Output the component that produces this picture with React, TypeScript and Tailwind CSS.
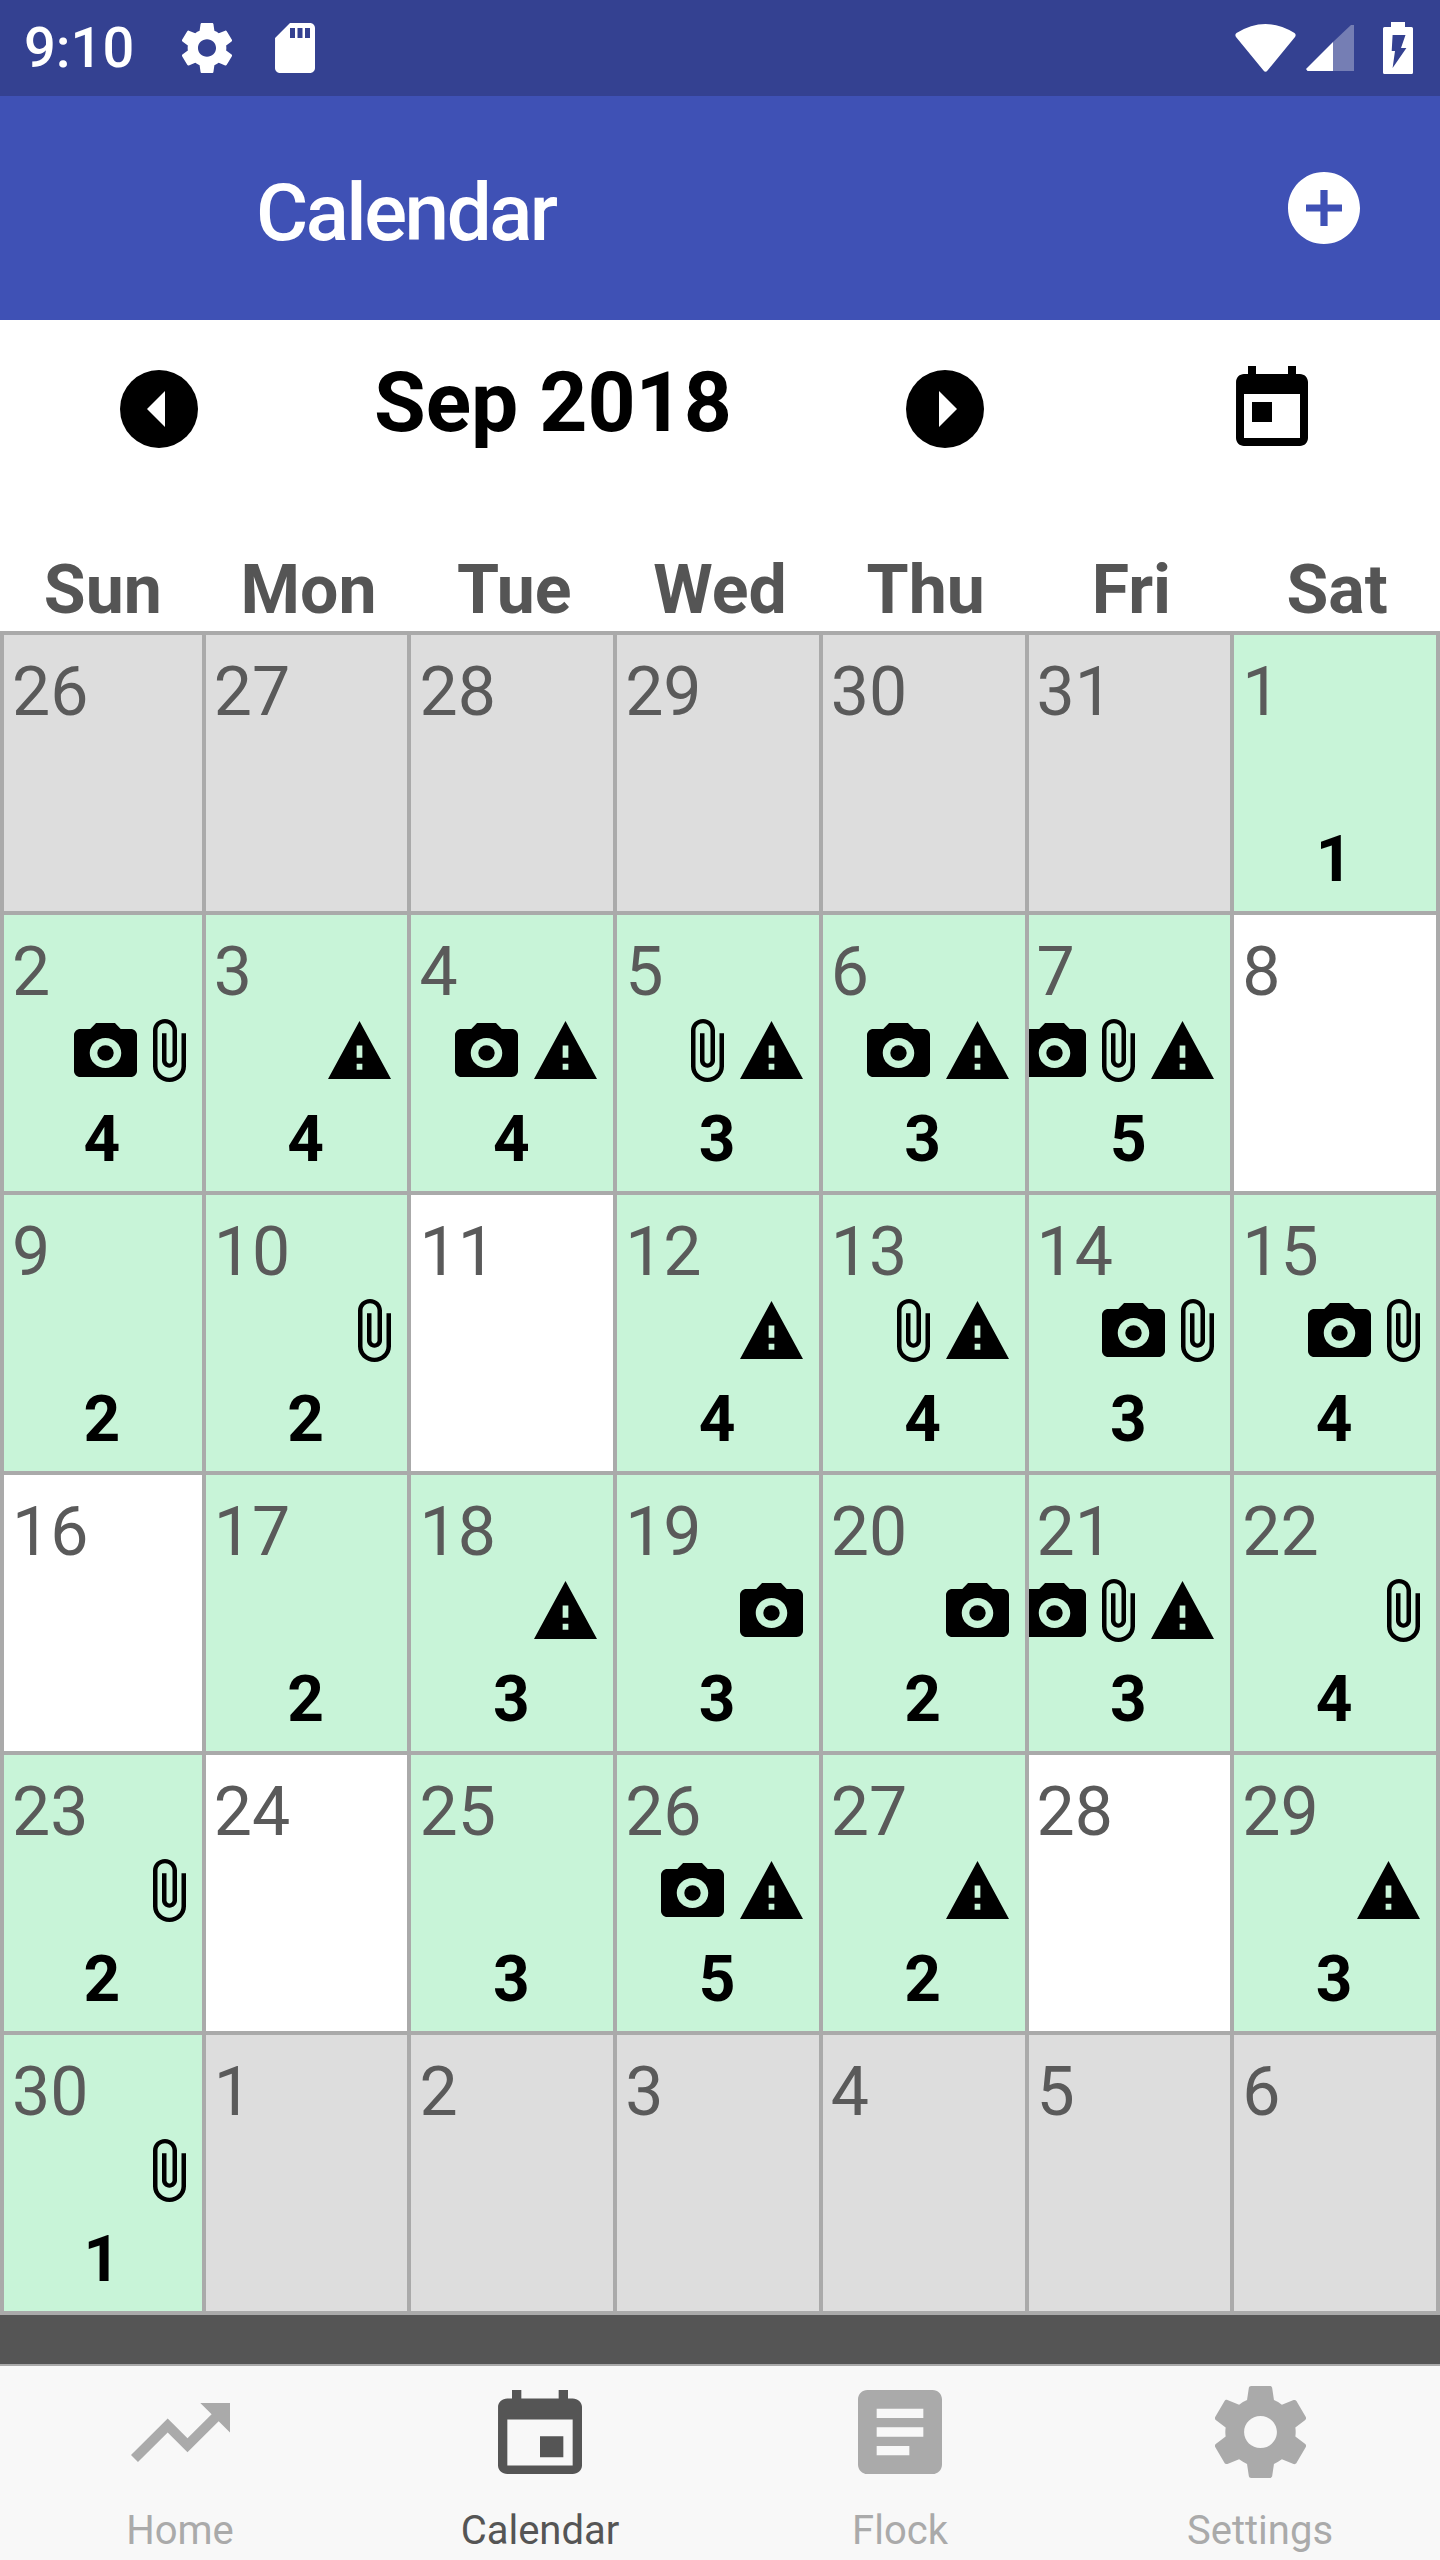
import * as React from "react";

type Mark = "c" | "p" | "w";
type Tone = "out" | "on" | "off";

interface Day {
  n: number;
  tone: Tone;
  marks?: Mark[];
  count?: number;
}

const out = (n: number): Day => ({ n, tone: "out" });
const off = (n: number): Day => ({ n, tone: "off" });
const on = (n: number, count: number, ...marks: Mark[]): Day => ({ n, tone: "on", count, marks });

const days: Day[] = [
  out(26), out(27), out(28), out(29), out(30), out(31), on(1, 1),
  on(2, 4, "c", "p"), on(3, 4, "w"), on(4, 4, "c", "w"), on(5, 3, "p", "w"), on(6, 3, "c", "w"), on(7, 5, "c", "p", "w"), off(8),
  on(9, 2), on(10, 2, "p"), off(11), on(12, 4, "w"), on(13, 4, "p", "w"), on(14, 3, "c", "p"), on(15, 4, "c", "p"),
  off(16), on(17, 2), on(18, 3, "w"), on(19, 3, "c"), on(20, 2, "c"), on(21, 3, "c", "p", "w"), on(22, 4, "p"),
  on(23, 2, "p"), off(24), on(25, 3), on(26, 5, "c", "w"), on(27, 2, "w"), off(28), on(29, 3, "w"),
  on(30, 1, "p"), out(1), out(2), out(3), out(4), out(5), out(6),
];

const weekdays = ["Sun", "Mon", "Tue", "Wed", "Thu", "Fri", "Sat"];

const gearPath =
  "M19.43 12.98c.04-.32.07-.64.07-.98s-.03-.66-.07-.98l2.11-1.65c.19-.15.24-.42.12-.64l-2-3.46c-.12-.22-.39-.3-.61-.22l-2.49 1c-.52-.4-1.08-.73-1.69-.98l-.38-2.65C14.46 2.18 14.25 2 14 2h-4c-.25 0-.46.18-.49.42l-.38 2.65c-.61.25-1.17.59-1.69.98l-2.49-1c-.23-.09-.49 0-.61.22l-2 3.46c-.13.22-.07.49.12.64l2.11 1.65c-.04.32-.07.65-.07.98s.03.66.07.98l-2.11 1.65c-.19.15-.24.42-.12.64l2 3.46c.12.22.39.3.61.22l2.49-1c.52.4 1.08.73 1.69.98l.38 2.65c.03.24.24.42.49.42h4c.25 0 .46-.18.49-.42l.38-2.65c.61-.25 1.17-.59 1.69-.98l2.49 1c.23.09.49 0 .61-.22l2-3.46c.12-.22.07-.49-.12-.64l-2.11-1.65zM12 15.5c-1.93 0-3.5-1.57-3.5-3.5s1.57-3.5 3.5-3.5 3.5 1.57 3.5 3.5-1.57 3.5-3.5 3.5z";
const todayPath =
  "M19 3h-1V1h-2v2H8V1H6v2H5c-1.11 0-1.99.9-1.99 2L3 19c0 1.1.89 2 2 2h14c1.1 0 2-.9 2-2V5c0-1.1-.9-2-2-2zm0 16H5V8h14v11zM7 10h5v5H7z";
const eventPath =
  "M17 12h-5v5h5v-5zM16 1v2H8V1H6v2H5c-1.11 0-1.99.9-1.99 2L3 19c0 1.1.89 2 2 2h14c1.1 0 2-.9 2-2V5c0-1.1-.9-2-2-2h-1V1h-2zm3 18H5V8h14v11z";

// viewBox is cropped to the glyph so width/height below are the measured ink size
const Glyph = ({ box, d, className }: { box: string; d: string; className: string }) => (
  <svg viewBox={box} preserveAspectRatio="none" fill="currentColor" className={className}>
    <path d={d} />
  </svg>
);

const Camera = () => (
  <svg viewBox="2 2 20 18" preserveAspectRatio="none" fill="currentColor" className="w-[63px] h-[54px]">
    <circle cx="12" cy="12" r="2.6" />
    <path d="M9 2L7.17 4H4c-1.1 0-2 .9-2 2v12c0 1.1.9 2 2 2h16c1.1 0 2-.9 2-2V6c0-1.1-.9-2-2-2h-3.17L15 2H9zm3 15c-2.76 0-5-2.24-5-5s2.24-5 5-5 5 2.24 5 5-2.24 5-5 5z" />
  </svg>
);

const Clip = () => (
  <Glyph
    box="7 1 11 22"
    className="w-[33px] h-[63px]"
    d="M16.5 6v11.5c0 2.21-1.79 4-4 4s-4-1.79-4-4V5c0-1.38 1.12-2.5 2.5-2.5s2.5 1.12 2.5 2.5v10.5c0 .55-.45 1-1 1s-1-.45-1-1V6H10v9.5c0 1.38 1.12 2.5 2.5 2.5s2.5-1.12 2.5-2.5V5c0-2.21-1.79-4-4-4S7 2.79 7 5v12.5c0 3.04 2.46 5.5 5.5 5.5s5.5-2.46 5.5-5.5V6h-1.5z"
  />
);

const Warn = () => (
  <Glyph
    box="1 2 22 19"
    className="w-[63px] h-[58px]"
    d="M1 21h22L12 2 1 21zm12-3h-2v-2h2v2zm0-4h-2v-4h2v4z"
  />
);

const MarkIcon = ({ mark }: { mark: Mark }) => {
  if (mark === "c") {
    return (
      <div className="w-[79px] shrink-0 flex justify-center">
        <Camera />
      </div>
    );
  }
  if (mark === "p") {
    return (
      <div className="w-[49px] shrink-0 flex justify-center">
        <Clip />
      </div>
    );
  }
  return (
    <div className="w-[79px] shrink-0 flex justify-center">
      <Warn />
    </div>
  );
};

const DayCell = ({ day, first }: { day: Day; first: boolean }) => {
  const tone =
    day.tone === "out" ? "bg-[#dddddd]" : day.tone === "on" ? "bg-[#c8f4d8]" : "bg-white";
  return (
    <div
      className={`${tone} ${first ? "border-l-4" : ""} h-[280px] border-r-4 border-b-4 border-[#aaaaaa] overflow-hidden flex flex-col`}
    >
      <div className="h-[100px] pt-[22px] pl-[8px] text-[68px] leading-[70px] text-[#5a5a5a]">{day.n}</div>
      <div className="h-[70px] flex items-center justify-end pr-[8px] text-black">
        {day.marks?.map((m) => <MarkIcon key={m} mark={m} />)}
      </div>
      <div className="h-[64px] mt-[23px] pr-[2px] flex items-center justify-center text-[64px] leading-[64px] font-bold text-black">
        {day.count}
      </div>
    </div>
  );
};

const NavItem = ({ label, active, children }: { label: string; active?: boolean; children: React.ReactNode }) => (
  <div className={`flex flex-col items-center ${active ? "text-[#555555]" : "text-[#aaaaaa]"}`}>
    <div className="h-[132px] flex items-center justify-center">{children}</div>
    <div className="mt-[9px] text-[40px] leading-[48px]">{label}</div>
  </div>
);

export default function App() {
  return (
    <div className="w-[1440px] h-[2560px] bg-white overflow-hidden font-[Roboto,sans-serif]">
      <div className="h-[96px] bg-[#344191] text-white flex items-center">
        <span className="ml-[24px] text-[56px] leading-[64px] font-medium">9:10</span>
        <Glyph box="2.3 2 19.4 20" d={gearPath} className="ml-[48px] w-[50px] h-[50px]" />
        <Glyph
          box="4 2 16 20"
          d="M18 2h-8L4.02 8 4 20c0 1.1.9 2 2 2h12c1.1 0 2-.9 2-2V4c0-1.1-.9-2-2-2zm-6 6h-2V4h2v4zm3 0h-2V4h2v4zm3 0h-2V4h2v4z"
          className="ml-[43px] w-[40px] h-[50px]"
        />
        <div className="ml-auto mr-[27px] flex items-center">
          <svg viewBox="0 0 61 48" fill="currentColor" className="w-[61px] h-[48px]">
            <path d="M1.5 9Q30.5-9 59.5 9Q61.5 10.5 60 13L32.5 46.5Q30.5 49 28.5 46.5L1 13Q-.5 10.5 1.5 9Z" />
          </svg>
          <svg viewBox="0 0 48 46" fill="currentColor" className="ml-[10px] w-[48px] h-[46px]">
            <path d="M0 44L27 17V46H1.5Z" />
            <path d="M27 17L45 0H48V46H27Z" opacity="0.32" />
          </svg>
          <svg viewBox="0 0 30 52" fill="currentColor" className="ml-[29px] w-[30px] h-[52px]">
            <path
              fillRule="evenodd"
              d="M8 0H22V5H28.5Q30 5 30 6.5V50.5Q30 52 28.5 52H1.5Q0 52 0 50.5V6.5Q0 5 1.5 5H8ZM9.6 13H22.5L18 26H23.4L9.6 46L12 29H8.7Z"
            />
          </svg>
        </div>
      </div>

      <div className="h-[224px] bg-[#3f51b5] text-white flex items-center">
        <div className="ml-[256px] text-[80px] leading-[96px] font-medium tracking-[-2.5px] mt-[10px]">Calendar</div>
        <svg viewBox="2 2 20 20" fill="currentColor" className="ml-auto mr-[80px] w-[72px] h-[72px]">
          <path d="M12 2C6.48 2 2 6.48 2 12s4.48 10 10 10 10-4.48 10-10S17.52 2 12 2zm5 11h-4v4h-2v-4H7v-2h4V7h2v4h4v2z" />
        </svg>
      </div>

      <div className="h-[178px] flex items-center text-black">
        <svg viewBox="0 0 78 78" className="ml-[120px] w-[78px] h-[78px]">
          <circle cx="39" cy="39" r="39" fill="currentColor" />
          <path d="M45 21V57L27 39Z" fill="white" />
        </svg>
        <div className="w-[352px] ml-[176px] text-[84px] leading-[96px] font-bold mb-[12px] whitespace-nowrap">Sep 2018</div>
        <svg viewBox="0 0 78 78" className="ml-[180px] w-[78px] h-[78px]">
          <circle cx="39" cy="39" r="39" fill="currentColor" />
          <path d="M33 21V57L51 39Z" fill="white" />
        </svg>
        <Glyph box="3 1 18 20" d={todayPath} className="ml-[252px] w-[72px] h-[80px] mb-[6px]" />
      </div>

      <div className="h-[133px] grid grid-cols-7 items-end text-[68px] leading-[76px] font-bold text-[#555555] text-center">
        {weekdays.map((w) => (
          <div key={w} className="pb-[3px]">{w}</div>
        ))}
      </div>

      <div className="border-t-4 border-[#aaaaaa] grid grid-cols-7">
        {days.map((d, i) => (
          <DayCell key={i} day={d} first={i % 7 === 0} />
        ))}
      </div>

      <div className="h-[49px] bg-[#555555]" />
      <div className="h-[196px] bg-[#f8f8f8] border-t-2 border-[#aaaaaa] grid grid-cols-4">
        <NavItem label="Home">
          <Glyph
            box="2 6 20 12"
            d="M16 6l2.29 2.29-4.88 4.88-4-4L2 16.59 3.41 18l6-6 4 4 6.3-6.29L22 12V6z"
            className="w-[99px] h-[59px]"
          />
        </NavItem>
        <NavItem label="Calendar" active>
          <Glyph box="3 1 18 20" d={eventPath} className="w-[84px] h-[84px]" />
        </NavItem>
        <NavItem label="Flock">
          <Glyph
            box="3 3 18 18"
            d="M19 3H5c-1.1 0-2 .9-2 2v14c0 1.1.9 2 2 2h14c1.1 0 2-.9 2-2V5c0-1.1-.9-2-2-2zm-5 14H7v-2h7v2zm3-4H7v-2h10v2zm0-4H7V7h10v2z"
            className="w-[84px] h-[84px]"
          />
        </NavItem>
        <NavItem label="Settings">
          <Glyph box="2.3 2 19.4 20" d={gearPath} className="w-[91px] h-[92px]" />
        </NavItem>
      </div>
    </div>
  );
}
